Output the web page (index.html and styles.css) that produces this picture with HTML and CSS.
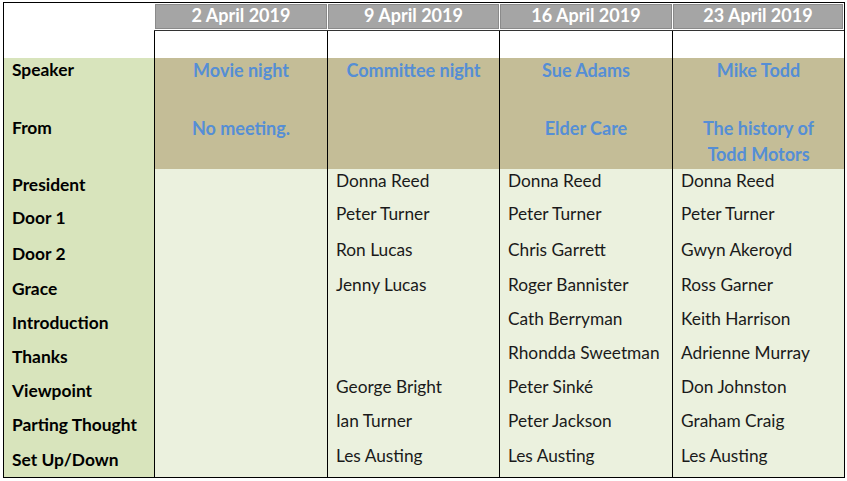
FILE: index.html
```html
<!DOCTYPE html>
<html>
<head>
<meta charset="utf-8">
<link rel="stylesheet" href="styles.css">
</head>
<body>
<div class="sheet">
  <div class="corner"></div>
  <div class="hd">2 April 2019</div>
  <div class="hd">9 April 2019</div>
  <div class="hd">16 April 2019</div>
  <div class="hd">23 April 2019</div>
  <div class="blank"></div>
  <div class="blank"></div>
  <div class="blank"></div>
  <div class="blank"></div>

  <div class="lab sp">Speaker</div>
  <div class="tan sp">Movie night</div>
  <div class="tan sp">Committee night</div>
  <div class="tan sp">Sue Adams</div>
  <div class="tan sp">Mike Todd</div>

  <div class="lab fr">From</div>
  <div class="tan fr">No meeting.</div>
  <div class="tan fr"></div>
  <div class="tan fr">Elder Care</div>
  <div class="tan fr">The history of<br>Todd Motors</div>

  <div class="lab">President</div><div class="nm"></div><div class="nm">Donna Reed</div><div class="nm">Donna Reed</div><div class="nm">Donna Reed</div>
  <div class="lab">Door 1</div><div class="nm"></div><div class="nm">Peter Turner</div><div class="nm">Peter Turner</div><div class="nm">Peter Turner</div>
  <div class="lab">Door 2</div><div class="nm"></div><div class="nm">Ron Lucas</div><div class="nm">Chris Garrett</div><div class="nm">Gwyn Akeroyd</div>
  <div class="lab">Grace</div><div class="nm"></div><div class="nm">Jenny Lucas</div><div class="nm">Roger Bannister</div><div class="nm">Ross Garner</div>
  <div class="lab">Introduction</div><div class="nm"></div><div class="nm"></div><div class="nm">Cath Berryman</div><div class="nm">Keith Harrison</div>
  <div class="lab">Thanks</div><div class="nm"></div><div class="nm"></div><div class="nm">Rhondda Sweetman</div><div class="nm">Adrienne Murray</div>
  <div class="lab">Viewpoint</div><div class="nm"></div><div class="nm">George Bright</div><div class="nm">Peter Sinké</div><div class="nm">Don Johnston</div>
  <div class="lab">Parting Thought</div><div class="nm"></div><div class="nm">Ian Turner</div><div class="nm">Peter Jackson</div><div class="nm">Graham Craig</div>
  <div class="lab">Set Up/Down</div><div class="nm"></div><div class="nm">Les Austing</div><div class="nm">Les Austing</div><div class="nm">Les Austing</div>
</div>
</body>
</html>
```
FILE: styles.css
```css
html, body {
  margin: 0;
  padding: 0;
  background: #fff;
}
body {
  font-family: Lato, "Liberation Sans", sans-serif;
}
.sheet {
  margin: 2px 0 0 3px;
  width: 840px;
  border: 1px solid #000;
  display: grid;
  grid-template-columns: 150px 172px 171px 172px 171px;
  grid-template-rows: 28px 27px 41px 70px 33px 36px 35px 34px 34px 34px 34px 35px 33px;
  column-gap: 1px;
  background: #000;
}
.corner {
  grid-row: span 2;
  background: #fff;
}
.hd {
  background: #a5a5a5;
  color: #fff;
  font-weight: 700;
  font-size: 18px;
  text-align: center;
  line-height: 24px;
  box-shadow: inset 0 0 0 1px #fff, inset 0 0 0 2px #8a8a8a;
  border-bottom: 1px solid #333;
  box-sizing: border-box;
  margin: 0 -1px;
}
.hd:nth-child(5) { margin-right: 0; }
.blank {
  background: #fff;
}
.lab {
  background: #d8e4bc;
  color: #000;
  font-weight: 700;
  font-size: 17.4px;
  line-height: 24px;
  padding: 4px 0 0 8px;
}
.lab.sp { padding-top: 0; }
.lab.fr { padding-top: 17px; }
.tan {
  background: #c4bd97;
  color: #558ed5;
  font-weight: 700;
  font-size: 18px;
  text-align: center;
  line-height: 26px;
}
.tan.sp { line-height: 24px; }
.tan.fr { padding-top: 16px; }
.nm {
  background: #ebf1de;
  color: #1a1a1a;
  font-size: 17.3px;
  line-height: 24px;
  padding-left: 8px;
}
```
